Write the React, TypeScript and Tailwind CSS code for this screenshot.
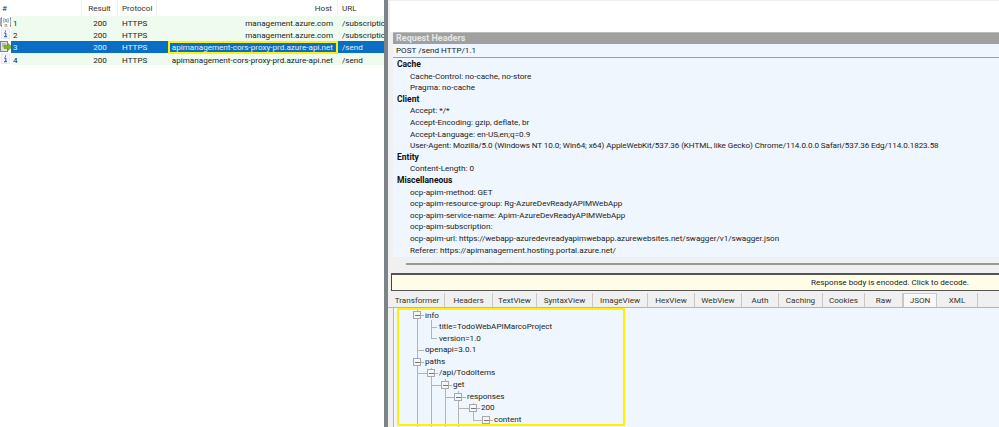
const font = "font-['Roboto','Liberation_Sans',sans-serif]";

const sessions = [
  { id: 1, host: 'management.azure.com', url: '/subscriptions', icon: 'json' },
  { id: 2, host: 'management.azure.com', url: '/subscriptions', icon: 'info' },
  { id: 3, host: 'apimanagement-cors-proxy-prd.azure-api.net', url: '/send', icon: 'send', selected: true },
  { id: 4, host: 'apimanagement-cors-proxy-prd.azure-api.net', url: '/send', icon: 'info' },
];

const headerGroups = [
  { name: 'Cache', items: ['Cache-Control: no-cache, no-store', 'Pragma: no-cache'] },
  {
    name: 'Client',
    items: [
      'Accept: */*',
      'Accept-Encoding: gzip, deflate, br',
      'Accept-Language: en-US,en;q=0.9',
      'User-Agent: Mozilla/5.0 (Windows NT 10.0; Win64; x64) AppleWebKit/537.36 (KHTML, like Gecko) Chrome/114.0.0.0 Safari/537.36 Edg/114.0.1823.58',
    ],
  },
  { name: 'Entity', items: ['Content-Length: 0'] },
  {
    name: 'Miscellaneous',
    items: [
      'ocp-apim-method: GET',
      'ocp-apim-resource-group: Rg-AzureDevReadyAPIMWebApp',
      'ocp-apim-service-name: Apim-AzureDevReadyAPIMWebApp',
      'ocp-apim-subscription:',
      'ocp-apim-url: https://webapp-azuredevreadyapimwebapp.azurewebsites.net/swagger/v1/swagger.json',
      'Referer: https://apimanagement.hosting.portal.azure.net/',
    ],
  },
];

const tabs = [
  { label: 'Transformer', w: 'w-[55px]' },
  { label: 'Headers', w: 'w-[48px]' },
  { label: 'TextView', w: 'w-[44px]' },
  { label: 'SyntaxView', w: 'w-[56px]' },
  { label: 'ImageView', w: 'w-[55px]' },
  { label: 'HexView', w: 'w-[47px]' },
  { label: 'WebView', w: 'w-[47px]' },
  { label: 'Auth', w: 'w-[37px]' },
  { label: 'Caching', w: 'w-[44px]' },
  { label: 'Cookies', w: 'w-[42px]' },
  { label: 'Raw', w: 'w-[38px]' },
  { label: 'JSON', w: 'w-[34px]', active: true },
  { label: 'XML', w: 'w-[41px]' },
];

const tree = [
  { text: 'info', pad: 'pl-[31px]' },
  { text: 'title=TodoWebAPIMarcoProject', pad: 'pl-[45px]' },
  { text: 'version=1.0', pad: 'pl-[45px]' },
  { text: 'openapi=3.0.1', pad: 'pl-[31px]' },
  { text: 'paths', pad: 'pl-[31px]' },
  { text: '/api/TodoItems', pad: 'pl-[45px]' },
  { text: 'get', pad: 'pl-[59px]' },
  { text: 'responses', pad: 'pl-[73px]' },
  { text: '200', pad: 'pl-[87px]' },
  { text: 'content', pad: 'pl-[100px]' },
];

function RowIcon({ type }: { type: string }) {
  if (type === 'json') {
    return (
      <svg width="12" height="12" viewBox="0 0 12 12" className="shrink-0">
        <path d="M2 2H1V10H2M10 2H11V10H10" fill="none" stroke="#555" />
        <text x="6" y="5.5" fontSize="5" textAnchor="middle" fill="#333" fontFamily="Liberation Sans">{'{s}'}</text>
        <text x="6" y="10.5" fontSize="5" textAnchor="middle" fill="#333" fontFamily="Liberation Sans">n</text>
      </svg>
    );
  }
  if (type === 'send') {
    return (
      <svg width="12" height="12" viewBox="0 0 12 12" className="shrink-0">
        <rect x="0.5" y="0.5" width="7" height="10" fill="#dfe3e6" stroke="#7d8589" />
        <path d="M2 3H6M2 5H6" stroke="#8d9598" />
        <path d="M4 4.5H8V2.5L12 6L8 9.5V7.5H4Z" fill="#7fb81f" stroke="#5a8f12" strokeWidth="0.5" />
      </svg>
    );
  }
  return (
    <svg width="12" height="12" viewBox="0 0 12 12" className="shrink-0">
      <rect x="1.5" y="1" width="8" height="9.5" fill="#f4f6fc" stroke="#e6eaf4" />
      <path d="M5.5 2.5V3.7" fill="none" stroke="#2a49c8" strokeWidth="1" />
      <path d="M4.2 5H5.8V8.5M4 8.7H7" fill="none" stroke="#2a49c8" strokeWidth="1" />
    </svg>
  );
}

function SessionList() {
  return (
    <div className="w-[384px] shrink-0 bg-white overflow-hidden">
      <div className="flex h-[16px] items-center text-[8.1px] text-[#333]">
        <div className="w-[82px] pl-[2px] border-r border-[#f0f0f0] h-full flex items-center">#</div>
        <div className="w-[36px] border-r border-[#f0f0f0] h-full flex items-center justify-center">Result</div>
        <div className="w-[39px] pl-[4px] border-r border-[#f0f0f0] h-full flex items-center">Protocol</div>
        <div className="w-[181px] pr-[5px] border-r border-[#f0f0f0] h-full flex items-center justify-end">Host</div>
        <div className="pl-[4px]">URL</div>
      </div>
      {sessions.map((s) => (
        <div key={s.id} className="flex h-[12.33px] items-center text-[8.1px] leading-none text-[#222]">
          <div className="w-[11px] flex justify-center shrink-0 bg-white">
            <RowIcon type={s.icon} />
          </div>
          <div className={`flex flex-1 h-full items-center pt-[1px] ${s.selected ? 'bg-[#0a6fc4] text-[#e4f0fb]' : 'bg-[#effbef]'}`}>
            <div className="w-[71px] pl-[2px]">{s.id}</div>
            <div className="w-[36px] text-center">200</div>
            <div className="w-[39px] pl-[4px]">HTTPS</div>
            <div className="w-[181px] h-full relative flex items-center justify-end pr-[5px] whitespace-nowrap">
              {s.selected && (
                <div className="absolute left-[11px] right-0 -top-[1px] -bottom-[1px] border-2 border-[#fff200]" />
              )}
              {s.host}
            </div>
            <div className="pl-[4px] whitespace-nowrap overflow-hidden flex-1">{s.url}</div>
          </div>
        </div>
      ))}
    </div>
  );
}

function RequestHeaders() {
  return (
    <div className="h-[257px] flex flex-col pl-[5px] overflow-hidden">
      <div className="h-[32px] shrink-0 bg-white -ml-[3px]">
        <div className="h-[1px] bg-[#efefef]" />
      </div>
      <div className="h-[12px] shrink-0 bg-[#a0a0a0] border-t border-[#bcbcbc] flex items-center pl-[3px] text-[9px] font-bold text-[#e6e6e6] leading-none">
        Request Headers
      </div>
      <div className="h-[14px] shrink-0 bg-[#eff6fd] border-b border-[#a0a0a0] flex items-center pl-[3px] text-[8.1px] text-[#222] leading-none">
        POST /send HTTP/1.1
      </div>
      <div className="flex-1 bg-[#eff6fd] pl-[4px] pt-[1px] text-[8.1px] leading-[11.6px] text-[#222] whitespace-nowrap">
        {headerGroups.map((g) => (
          <div key={g.name}>
            <div className="font-bold text-[8.5px] text-[#111]">{g.name}</div>
            {g.items.map((it) => (
              <div key={it} className={it.startsWith('User-Agent') ? 'pl-[13px] tracking-[-0.08px]' : 'pl-[13px]'}>{it}</div>
            ))}
          </div>
        ))}
      </div>
    </div>
  );
}

function TreeLines() {
  const boxes = [
    [417, 315],
    [417, 362],
    [431, 373],
    [445, 385],
    [458, 397],
    [473, 408],
    [486, 420],
  ];
  return (
    <svg className="absolute left-0 top-0" width="605" height="119" viewBox="394 308 605 119">
      <g stroke="#b4b4b4" fill="none" shapeRendering="crispEdges">
        <path d="M417.5 308V427M431.5 320V338.5H437M431.5 327H437M417.5 350.5H424M431.5 368V427M445.5 379V427M458.5 391V427M473.5 403V420.5H483" />
        <path d="M417.5 373.5H428M431.5 385.5H442M445.5 397.5H455M458.5 408.5H470" />
        <path d="M421 315.5H424M421 362.5H424M435 373.5H438M449 385.5H452M462 397.5H466M477 408.5H480M490 420.5H493" />
      </g>
      {boxes.map(([x, y]) => (
        <g key={`${x}-${y}`} shapeRendering="crispEdges">
          <rect x={x - 3.5} y={y - 3.5} width="7" height="7" fill="#f4f6f9" stroke="#a8a8a8" />
          <path d={`M${x - 2} ${y + 0.5}H${x + 3}`} stroke="#777" />
        </g>
      ))}
    </svg>
  );
}

function ResponsePane() {
  return (
    <div className="flex-1 flex flex-col min-h-0">
      <div className="h-[16px] shrink-0 pt-[6px] pl-[18px]">
        <div className="h-[2px] bg-[#9a9a9a]" />
      </div>
      <div className="h-[18px] shrink-0 ml-[3px] bg-[#fffde8] border-t-2 border-[#555] border-b border-b-[#555] border-l border-l-[#444] flex items-center justify-end pr-[30px] text-[8.1px] text-[#222] leading-none">
        Response body is encoded. Click to decode.
      </div>
      <div className="h-[17px] shrink-0 pt-[2px] bg-[#f0f0f0] flex pl-[2px] border-b border-[#b5b5b5] text-[8.1px] text-[#333] leading-none">
        {tabs.map((t) => (
          <div
            key={t.label}
            className={`${t.w} flex items-center justify-center border-r border-[#c8c8c8] ${t.active ? 'bg-[#f8f8f8] border border-[#999] border-b-0' : ''}`}
          >
            {t.label}
          </div>
        ))}
      </div>
      <div className="flex-1 relative bg-[#eff6fd] ml-[5px] border-l border-[#b5b5b5] overflow-hidden text-[8.1px] leading-[11.6px] text-[#222]">
        <TreeLines />
        <div className="relative pt-[1.5px]">
          {tree.map((n) => (
            <div key={n.text} className={n.pad}>{n.text}</div>
          ))}
        </div>
        <div className="absolute left-[3px] top-0 w-[228px] h-[118px] border-2 border-[#fff200]" />
      </div>
    </div>
  );
}

export default function App() {
  return (
    <div className={`${font} flex w-[999px] h-[427px] overflow-hidden bg-white`}>
      <SessionList />
      <div className="w-[4px] shrink-0 bg-[#7d8489]" />
      <div className="flex-1 flex flex-col min-w-0 bg-[#f0f0f0]">
        <RequestHeaders />
        <ResponsePane />
      </div>
    </div>
  );
}
